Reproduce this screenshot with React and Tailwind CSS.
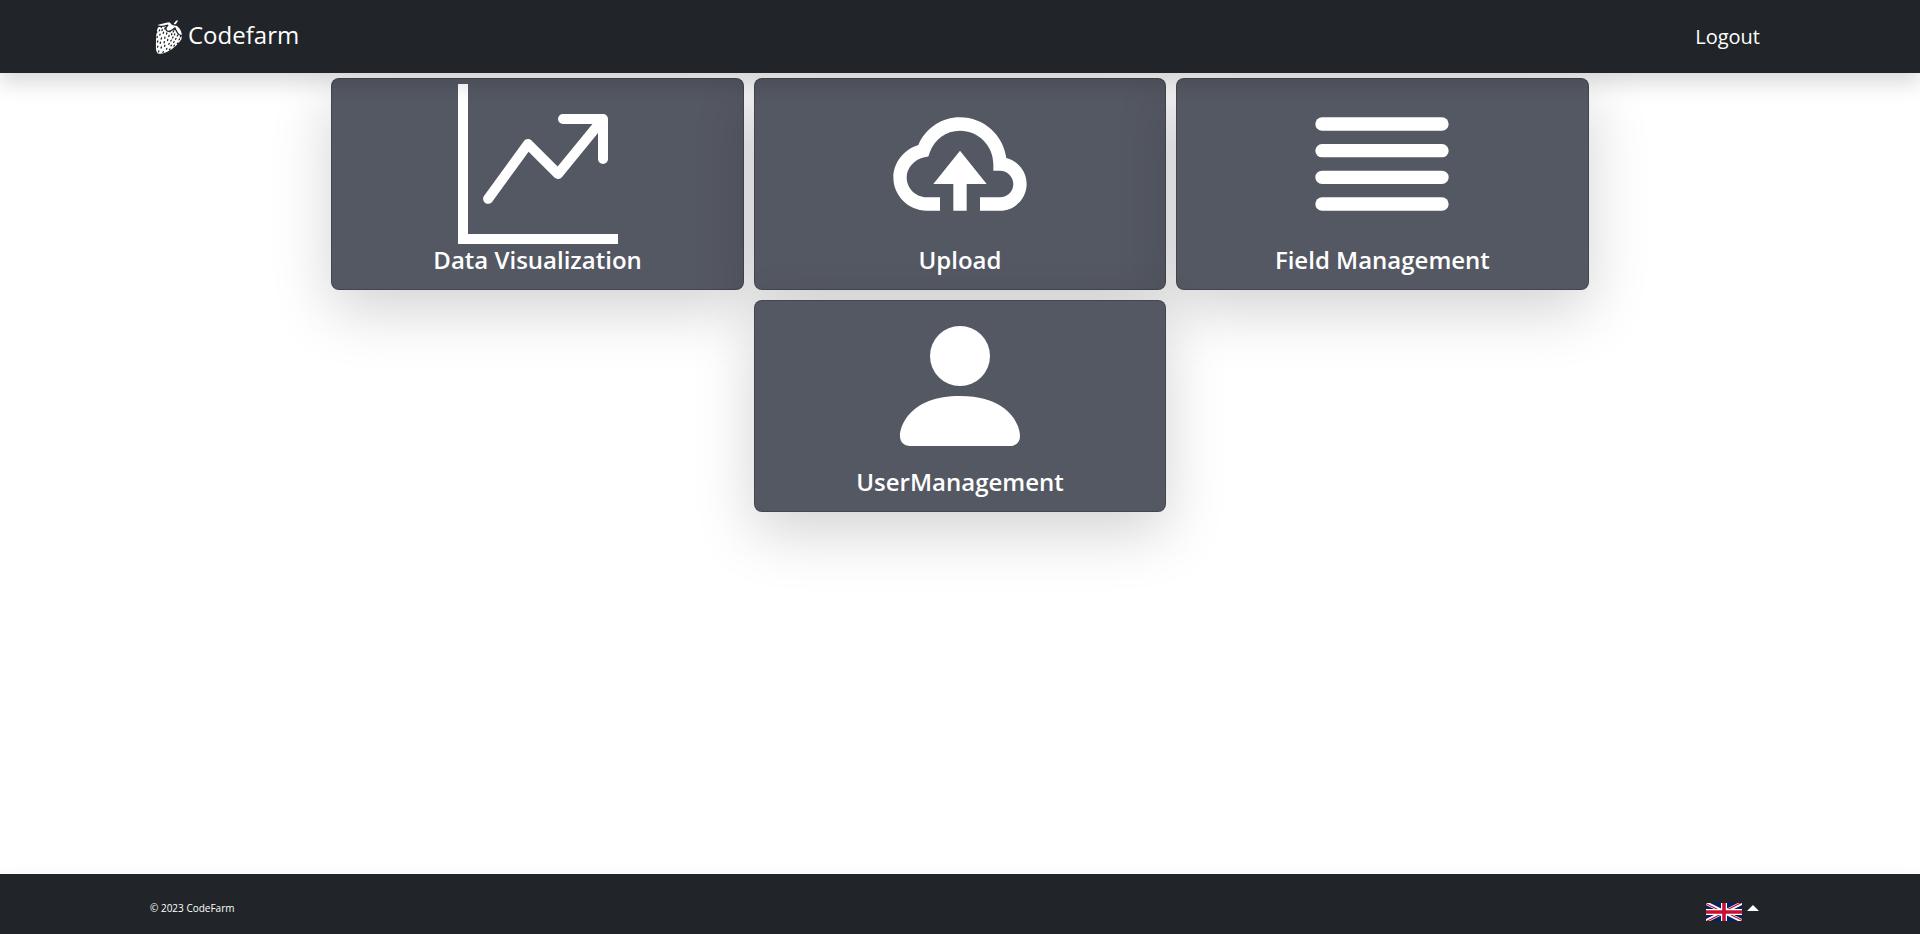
import { GiStrawberry } from "react-icons/gi";
import { BsGraphUpArrow, BsPersonFill } from "react-icons/bs";
import { BiCloudUpload } from "react-icons/bi";

function BarsIcon({ className }) {
  return (
    <svg viewBox="0 0 24 24" className={className} fill="currentColor" aria-hidden="true">
      <rect x="2" y="5" width="20" height="2" rx="1" />
      <rect x="2" y="9" width="20" height="2" rx="1" />
      <rect x="2" y="13" width="20" height="2" rx="1" />
      <rect x="2" y="17" width="20" height="2" rx="1" />
    </svg>
  );
}

function UnionJack() {
  return (
    <svg viewBox="0 0 60 30" className="h-[18px] w-9" role="img" aria-label="English">
      <clipPath id="flag-quarters">
        <path d="M30,15 h30 v15 z v15 h-30 z h-30 v-15 z v-15 h30 z" />
      </clipPath>
      <path d="M0,0 v30 h60 v-30 z" fill="#012169" />
      <path d="M0,0 L60,30 M60,0 L0,30" stroke="#fff" strokeWidth="6" />
      <path d="M0,0 L60,30 M60,0 L0,30" clipPath="url(#flag-quarters)" stroke="#C8102E" strokeWidth="4" />
      <path d="M30,0 v30 M0,15 h60" stroke="#fff" strokeWidth="10" />
      <path d="M30,0 v30 M0,15 h60" stroke="#C8102E" strokeWidth="6" />
    </svg>
  );
}

const cards = [
  { title: "Data Visualization", Icon: BsGraphUpArrow },
  { title: "Upload", Icon: BiCloudUpload },
  { title: "Field Management", Icon: BarsIcon },
  { title: "UserManagement", Icon: BsPersonFill },
];

export default function App() {
  return (
    <div className="flex min-h-screen flex-col bg-white font-['Open_Sans','Noto_Sans',sans-serif]">
      <header className="z-10 flex h-[73px] items-center justify-between bg-[#212529] px-[7.8125%] text-white shadow-[0_10px_20px_rgba(0,0,0,0.15)]">
        <a href="#home" className="flex items-center">
          <GiStrawberry className="size-[38px]" aria-hidden="true" />
          <span className="pb-1 text-2xl">Codefarm</span>
        </a>
        <a href="#logout" className="px-[10px] text-xl">Logout</a>
      </header>

      <main className="mx-auto flex w-[66%] grow flex-wrap content-start justify-center">
        {cards.map(({ title, Icon }) => (
          <div key={title} className="w-1/3 p-[5px]">
            <a
              href="#open"
              className="flex h-[212px] flex-col items-center rounded-lg border border-black/20 bg-[#545863] bg-clip-border pt-[5px] text-white shadow-[0_20px_60px_rgba(0,0,0,0.175)]"
            >
              <Icon className="size-40" aria-hidden="true" />
              <h2 className="text-2xl font-semibold">{title}</h2>
            </a>
          </div>
        ))}
      </main>

      <footer className="flex h-[60px] items-center justify-between bg-[#212529] px-[7.8125%] pt-2 text-white shadow-[0_10px_20px_rgba(0,0,0,0.15)]">
        <p className="text-[10px]">© 2023 CodeFarm</p>
        <button type="button" className="flex items-center gap-[5px] px-[11px] pt-2">
          <UnionJack />
          <span className="mb-2 border-x-[6px] border-b-[6px] border-x-transparent border-b-white" />
        </button>
      </footer>
    </div>
  );
}
